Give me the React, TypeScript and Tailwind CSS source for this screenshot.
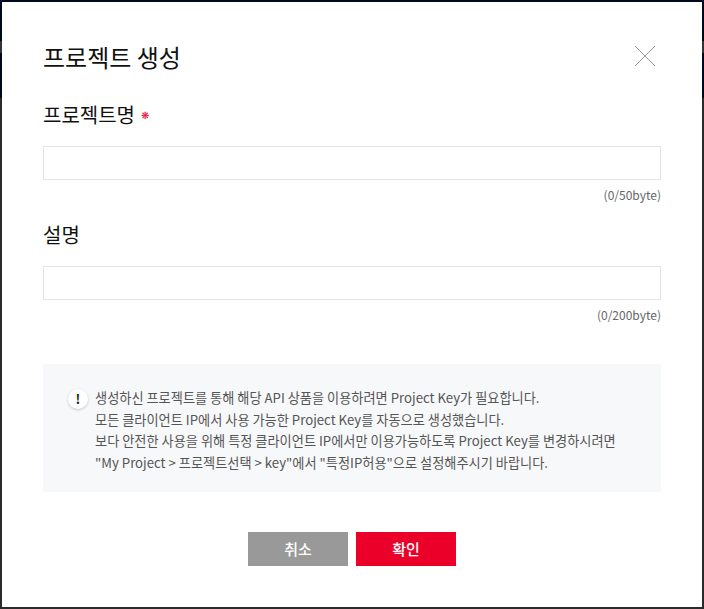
const kr = "font-['Noto_Sans_CJK_KR','Noto_Sans',sans-serif]"

function Field({ label, required, count }: { label: string; required?: boolean; count: string }) {
  return (
    <div>
      <div className="flex items-center h-[30px] text-[20px] text-[#111]">
        {label}
        {required && <span className="ml-[6px] text-[10px] text-[#eb0029] font-['DejaVu_Sans']">❋</span>}
      </div>
      <input className="block mt-[16px] w-full h-[34px] border border-[#e4e4e4] bg-white" />
      <div className="mt-[5px] mb-[1px] h-[20px] text-right text-[12px] leading-[20px] text-[#666]">{count}</div>
    </div>
  )
}

export default function App() {
  return (
    <div className={`relative h-[609px] w-[704px] overflow-hidden bg-[#2a2a2a] ${kr}`}>
      {/* page behind the dialog */}
      <div className="h-[98px] bg-[#000a1e] pt-[41px]">
        <div className="h-[12px] bg-[#333]" />
      </div>
      <div className="absolute inset-[2px] bg-white px-[41px] pt-[37px]">
        <div className="flex items-center justify-between h-[36px]">
          <h1 className="text-[24px] text-[#111]">프로젝트 생성</h1>
          <svg width="22" height="22" viewBox="0 0 22 22" className="mt-[-3px] mr-[5px]" stroke="#999" strokeWidth="1" fill="none">
            <path d="M1 1L21 21M21 1L1 21" />
          </svg>
        </div>
        <div className="mt-[25px]">
          <Field label="프로젝트명" required count="(0/50byte)" />
        </div>
        <div className="mt-[15px]">
          <Field label="설명" count="(0/200byte)" />
        </div>
        <div className="mt-[39px] flex h-[128px] bg-[#f7f8fa] pl-[25px] pt-[23px]">
          <div className="mt-[2px] mr-[7px] flex h-[20px] w-[20px] items-center justify-center rounded-full bg-white text-[13px] font-bold text-[#222] shadow-[0_1px_3px_rgba(0,0,0,0.2)]">!</div>
          <p className="text-[13.2px] leading-[21.5px] text-[#555]">
            생성하신 프로젝트를 통해 해당 API 상품을 이용하려면 Project Key가 필요합니다.<br />
            모든 클라이언트 IP에서 사용 가능한 Project Key를 자동으로 생성했습니다.<br />
            보다 안전한 사용을 위해 특정 클라이언트 IP에서만 이용가능하도록 Project Key를 변경하시려면<br />
            "My Project &gt; 프로젝트선택 &gt; key"에서 "특정IP허용"으로 설정해주시기 바랍니다.
          </p>
        </div>
        <div className="mt-[40px] flex justify-center gap-[8px]">
          <button className="h-[34px] w-[100px] bg-[#999] text-[15px] font-medium text-white">취소</button>
          <button className="h-[34px] w-[100px] bg-[#eb0029] text-[15px] font-medium text-white">확인</button>
        </div>
      </div>
    </div>
  )
}
